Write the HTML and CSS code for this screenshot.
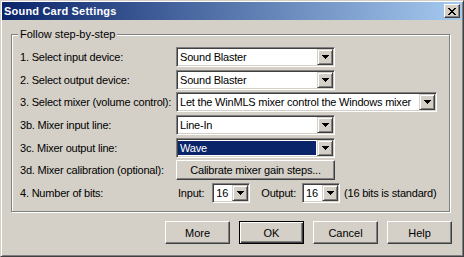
FILE: index.html
```html
<!DOCTYPE html>
<html lang="en">
<head>
<meta charset="UTF-8">
<title>Sound Card Settings</title>
<link rel="stylesheet" href="styles.css">
</head>
<body>
<div class="window">
    <div class="titlebar">
        <span class="title">Sound Card Settings</span>
        <span class="close"><svg width="8" height="7" viewBox="0 0 8 7"><path d="M0 0h2v1h-2z M6 0h2v1h-2z M1 1h2v1h-2z M5 1h2v1h-2z M2 2h4v1h-4z M3 3h2v1h-2z M2 4h4v1h-4z M1 5h2v1h-2z M5 5h2v1h-2z M0 6h2v1h-2z M6 6h2v1h-2z"/></svg></span>
    </div>
    <fieldset class="group">
        <legend>Follow step-by-step</legend>
        <div class="rows">
            <span class="label">1. Select input device:</span>
            <div class="combo"><span class="value">Sound Blaster</span><span class="drop"><svg width="7" height="4" viewBox="0 0 7 4"><path d="M0 0h7v1h-1v1h-1v1h-1v1h-1v-1h-1v-1h-1v-1h-1z"/></svg></span></div>

            <span class="label">2. Select output device:</span>
            <div class="combo"><span class="value">Sound Blaster</span><span class="drop"><svg width="7" height="4" viewBox="0 0 7 4"><path d="M0 0h7v1h-1v1h-1v1h-1v1h-1v-1h-1v-1h-1v-1h-1z"/></svg></span></div>

            <span class="label">3. Select mixer (volume control):</span>
            <div class="combo wide"><span class="value">Let the WinMLS mixer control the Windows mixer</span><span class="drop"><svg width="7" height="4" viewBox="0 0 7 4"><path d="M0 0h7v1h-1v1h-1v1h-1v1h-1v-1h-1v-1h-1v-1h-1z"/></svg></span></div>

            <span class="label">3b. Mixer input line:</span>
            <div class="combo"><span class="value">Line-In</span><span class="drop"><svg width="7" height="4" viewBox="0 0 7 4"><path d="M0 0h7v1h-1v1h-1v1h-1v1h-1v-1h-1v-1h-1v-1h-1z"/></svg></span></div>

            <span class="label">3c. Mixer output line:</span>
            <div class="combo"><span class="value selected">Wave</span><span class="drop"><svg width="7" height="4" viewBox="0 0 7 4"><path d="M0 0h7v1h-1v1h-1v1h-1v1h-1v-1h-1v-1h-1v-1h-1z"/></svg></span></div>

            <span class="label">3d. Mixer calibration (optional):</span>
            <button class="btn calibrate">Calibrate mixer gain steps...</button>

            <span class="label">4. Number of bits:</span>
            <div class="bits">
                <span class="bits-in">Input:</span>
                <div class="combo small"><span class="value">16</span><span class="drop"><svg width="7" height="4" viewBox="0 0 7 4"><path d="M0 0h7v1h-1v1h-1v1h-1v1h-1v-1h-1v-1h-1v-1h-1z"/></svg></span></div>
                <span class="bits-out">Output:</span>
                <div class="combo small"><span class="value">16</span><span class="drop"><svg width="7" height="4" viewBox="0 0 7 4"><path d="M0 0h7v1h-1v1h-1v1h-1v1h-1v-1h-1v-1h-1v-1h-1z"/></svg></span></div>
                <span class="bits-note">(16 bits is standard)</span>
            </div>
        </div>
    </fieldset>
    <div class="actions">
        <button class="btn">More</button>
        <button class="btn default">OK</button>
        <button class="btn">Cancel</button>
        <button class="btn">Help</button>
    </div>
</div>
</body>
</html>
```

FILE: styles.css
```css
body {
    margin: 0;
    background: #d4d0c8;
    font-family: "Liberation Sans", Arial, sans-serif;
    font-size: 11px;
    color: #000;
}
.window {
    width: 464px;
    height: 257px;
    box-sizing: border-box;
    padding: 1px;
    border: 1px solid;
    border-color: #d4d0c8 #404040 #404040 #d4d0c8;
    box-shadow: inset 1px 1px #fff, inset -1px -1px #808080;
    overflow: hidden;
}
.titlebar {
    height: 18px;
    display: flex;
    align-items: center;
    justify-content: space-between;
    padding: 0 2px;
    background: linear-gradient(to right, #0a246a, #a6caf0);
}
.title {
    color: #fff;
    font-weight: bold;
    letter-spacing: 0.2px;
}
.close {
    width: 16px;
    height: 14px;
    box-sizing: border-box;
    display: flex;
    align-items: center;
    justify-content: center;
    background: #d4d0c8;
    border: 1px solid;
    border-color: #fff #404040 #404040 #fff;
    box-shadow: inset -1px -1px #808080;
}
.close svg {
    display: block;
    margin-left: -1px;
}
.group {
    margin: 8px 12px 0 9px;
    padding: 0;
    min-width: 0;
    height: 184px;
    box-sizing: border-box;
    border: 1px solid #808080;
    box-shadow: inset 1px 1px #fff, 1px 1px #fff;
}
.group legend {
    margin-left: 6px;
    padding: 0 2px;
    line-height: 13px;
    background: #d4d0c8;
}
.rows {
    display: grid;
    grid-template-columns: 156px auto;
    grid-auto-rows: 20px;
    row-gap: 2.67px;
    align-items: center;
    padding: 6px 0 0 8px;
    letter-spacing: -0.2px;
}
.combo {
    width: 159px;
    height: 20px;
    box-sizing: border-box;
    display: flex;
    background: #fff;
    border: 1px solid;
    border-color: #808080 #fff #fff #808080;
    box-shadow: inset 1px 1px #404040, inset -1px -1px #d4d0c8;
    padding: 1px;
}
.combo.wide {
    width: 261px;
}
.combo.small {
    width: 38px;
}
.value {
    flex: 1;
    line-height: 16px;
    padding-left: 2px;
    white-space: nowrap;
    overflow: hidden;
}
.value.selected {
    margin: 1px 1px 1px 0;
    line-height: 14px;
    padding-left: 2px;
    background: #0a246a;
    color: #fff;
}
.drop {
    width: 16px;
    height: 16px;
    box-sizing: border-box;
    display: flex;
    align-items: center;
    justify-content: center;
    background: #d4d0c8;
    border: 1px solid;
    border-color: #d4d0c8 #404040 #404040 #d4d0c8;
    box-shadow: inset 1px 1px #fff, inset -1px -1px #808080;
}
.drop svg {
    display: block;
}
.btn {
    font: inherit;
    color: #000;
    background: #d4d0c8;
    border: 1px solid;
    border-color: #fff #404040 #404040 #fff;
    box-shadow: inset -1px -1px #808080;
    padding: 0;
    margin: 0;
    width: 65px;
    height: 23px;
}
.btn.calibrate {
    width: 159px;
    height: 20px;
    letter-spacing: -0.2px;
}
.btn.default {
    border: 1px solid #000;
    box-shadow: inset 1px 1px #fff, inset -1px -1px #404040, inset -2px -2px #808080;
}
.bits {
    display: flex;
    align-items: center;
}
.bits-in {
    margin: 0 8px 0 2px;
}
.bits-out {
    margin: 0 6px 0 11px;
}
.bits-note {
    margin-left: 4px;
}
.actions {
    display: flex;
    justify-content: flex-end;
    gap: 9px;
    margin: 9px 10px 0 0;
}
```
